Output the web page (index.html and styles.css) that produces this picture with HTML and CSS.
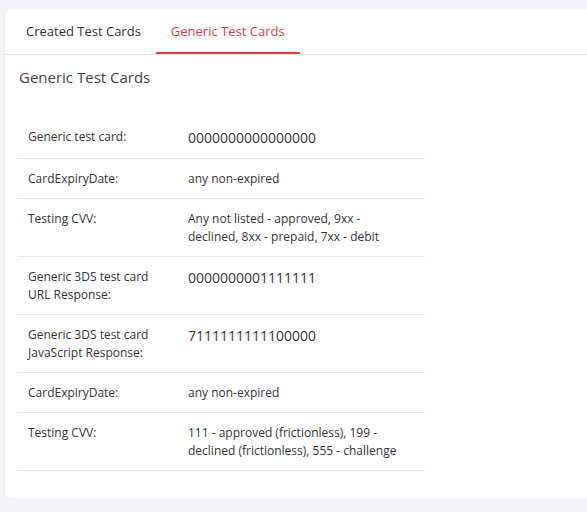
FILE: index.html
```html
<!DOCTYPE html>
<html lang="en">
<head>
    <meta charset="UTF-8">
    <meta name="viewport" content="width=device-width, initial-scale=1.0">
    <title>Test Cards</title>
    <link rel="stylesheet" href="styles.css">
</head>
<body>
    <div class="card">
        <div class="tabs">
            <div class="tab">Created Test Cards</div>
            <div class="tab active">Generic Test Cards</div>
        </div>
        <div class="card-body">
            <h2>Generic Test Cards</h2>
            <table class="test-table">
                <tr>
                    <td class="label">Generic test card:</td>
                    <td class="value number">0000000000000000</td>
                </tr>
                <tr>
                    <td class="label">CardExpiryDate:</td>
                    <td class="value">any non-expired</td>
                </tr>
                <tr>
                    <td class="label">Testing CVV:</td>
                    <td class="value">Any not listed - approved, 9xx - declined, 8xx - prepaid, 7xx - debit</td>
                </tr>
                <tr>
                    <td class="label">Generic 3DS test card URL Response:</td>
                    <td class="value number">0000000001111111</td>
                </tr>
                <tr>
                    <td class="label">Generic 3DS test card JavaScript Response:</td>
                    <td class="value number">7111111111100000</td>
                </tr>
                <tr>
                    <td class="label">CardExpiryDate:</td>
                    <td class="value">any non-expired</td>
                </tr>
                <tr>
                    <td class="label">Testing CVV:</td>
                    <td class="value">111 - approved (frictionless), 199 - declined (frictionless), 555 - challenge</td>
                </tr>
            </table>
        </div>
    </div>
</body>
</html>
```

FILE: styles.css
```css
body {
    background: #f3f3f8;
    color: #333333;
    font-family: 'Open Sans', sans-serif;
    margin: 0;
    padding: 9px 0 0 5px;
}

.card {
    background: #ffffff;
    border-radius: 5px 0 0 5px;
    box-shadow: 0 1px 3px rgba(0, 0, 0, 0.08);
    height: 489px;
    overflow: hidden;
}

.tabs {
    display: flex;
    padding-left: 6px;
    border-bottom: 1px solid #e6e6e6;
    height: 45px;
}

.tab {
    padding: 0 15px;
    font-size: 13px;
    line-height: 44px;
    color: #333333;
}

.tab.active {
    color: #dc3f42;
    border-bottom: 2px solid #dc3f42;
}

.card-body {
    padding: 0 0 0 12px;
}

h2 {
    font-size: 15px;
    font-weight: 400;
    color: #444444;
    margin: 0;
    padding: 12px 0 0 2px;
    line-height: 20px;
}

.test-table {
    border-collapse: collapse;
    table-layout: fixed;
    margin-top: 30px;
    width: 408px;
}

.test-table td {
    padding: 11px 11px 10px;
    border-bottom: 1px solid #e6e6e6;
    vertical-align: top;
    font-size: 12px;
    line-height: 18px;
}

.test-table .label {
    width: 138px;
}

.test-table .value {
    padding-right: 20px;
}

.test-table .number {
    font-size: 14px;
    line-height: 20px;
}
```
